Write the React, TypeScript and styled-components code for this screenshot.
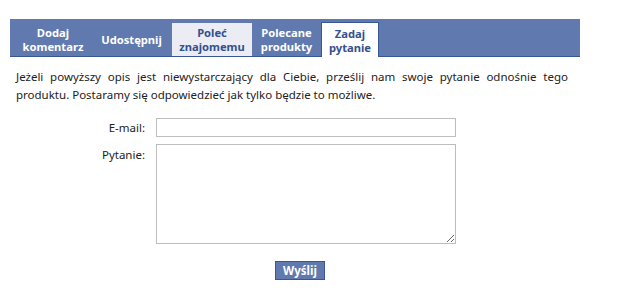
import React from "react";
import styled, { createGlobalStyle } from "styled-components";

const GlobalStyle = createGlobalStyle`
    body {
        margin: 0;
        background: #fff;
        font-family: "Noto Sans", "DejaVu Sans", sans-serif;
        color: #222;
    }
`;

type TabKind = "normal" | "light" | "active";

type TabItem = {
    lines: string[];
    width: number;
    kind: TabKind;
};

const tabs: TabItem[] = [
    { lines: ["Dodaj", "komentarz"], width: 76, kind: "normal" },
    { lines: ["Udostępnij"], width: 77, kind: "normal" },
    { lines: ["Poleć", "znajomemu"], width: 80, kind: "light" },
    { lines: ["Polecane", "produkty"], width: 65, kind: "normal" },
    { lines: ["Zadaj", "pytanie"], width: 58, kind: "active" },
];

const App = () => {
    return <Page>
        <GlobalStyle />
        <TabBar>
            {tabs.map((tab) => (
                <Tab key={tab.lines.join(" ")} $kind={tab.kind} $width={tab.width}>
                    {tab.lines.map((line) => <span key={line}>{line}</span>)}
                </Tab>
            ))}
        </TabBar>
        <Content>
            <Intro>
                Jeżeli powyższy opis jest niewystarczający dla Ciebie, prześlij nam swoje pytanie odnośnie tego
                produktu. Postaramy się odpowiedzieć jak tylko będzie to możliwe.
            </Intro>
            <Form onSubmit={(e) => e.preventDefault()}>
                <Label htmlFor="email" $top={false}>E-mail:</Label>
                <TextInput id="email" type="text" />
                <Label htmlFor="question" $top={true}>Pytanie:</Label>
                <TextArea id="question" />
                <Actions>
                    <SubmitButton type="submit">Wyślij</SubmitButton>
                </Actions>
            </Form>
        </Content>
    </Page>
}

export default App;

const Page = styled.div`
    padding: 19px 0 0 10px;
`

const TabBar = styled.div`
    display: flex;
    align-items: flex-end;
    gap: 2px;
    width: 565px;
    height: 37px;
    padding-left: 5px;
    background: #607ab0;
    border-bottom: 1px solid #3a5795;
`

const Tab = styled.div<{ $kind: TabKind; $width: number }>`
    box-sizing: border-box;
    width: ${(p) => p.$width}px;
    height: ${(p) => (p.$kind === "active" ? 35 : 33)}px;
    margin-bottom: ${(p) => (p.$kind === "active" ? -1 : 0)}px;
    display: flex;
    flex-direction: column;
    align-items: center;
    justify-content: center;
    padding-top: 1px;
    font-size: 11.2px;
    font-weight: 700;
    line-height: 14px;
    white-space: nowrap;
    color: ${(p) => (p.$kind === "normal" ? "#fff" : "#34508f")};
    background: ${(p) => (p.$kind === "normal" ? "transparent" : p.$kind === "light" ? "#ebecf4" : "#fff")};
    border: ${(p) => (p.$kind === "active" ? "1px solid #3a5795" : "none")};
    border-bottom: none;
`

const Content = styled.div`
    padding: 0 6px;
`

const Intro = styled.p`
    width: 552px;
    margin: 11px 0 0;
    font-size: 11.5px;
    line-height: 18px;
    text-align: justify;
`

const Form = styled.form`
    display: grid;
    grid-template-columns: 129px 300px;
    column-gap: 11px;
    row-gap: 7px;
    margin-top: 14px;
`

const Label = styled.label<{ $top: boolean }>`
    align-self: ${(p) => (p.$top ? "start" : "center")};
    padding-top: ${(p) => (p.$top ? 4 : 0)}px;
    text-align: right;
    font-size: 11.5px;
    line-height: 14px;
`

const TextInput = styled.input`
    box-sizing: border-box;
    width: 300px;
    height: 19px;
    margin: 0;
    padding: 1px 3px;
    border: 1px solid #bdbdbd;
    font-family: inherit;
    font-size: 11px;
    outline: none;
`

const TextArea = styled.textarea`
    box-sizing: border-box;
    width: 300px;
    height: 100px;
    margin: 0;
    padding: 2px 3px;
    border: 1px solid #bdbdbd;
    font-family: inherit;
    font-size: 11px;
    outline: none;
`

const Actions = styled.div`
    grid-column: 1 / -1;
    margin-top: 7px;
    padding-left: 259px;
`

const SubmitButton = styled.button`
    box-sizing: border-box;
    width: 50px;
    height: 19px;
    padding: 0;
    background: #607ab0;
    border: 1px solid #3a5795;
    color: #fff;
    font-family: inherit;
    font-size: 11.5px;
    font-weight: 700;
    line-height: 15px;
    cursor: pointer;
`
